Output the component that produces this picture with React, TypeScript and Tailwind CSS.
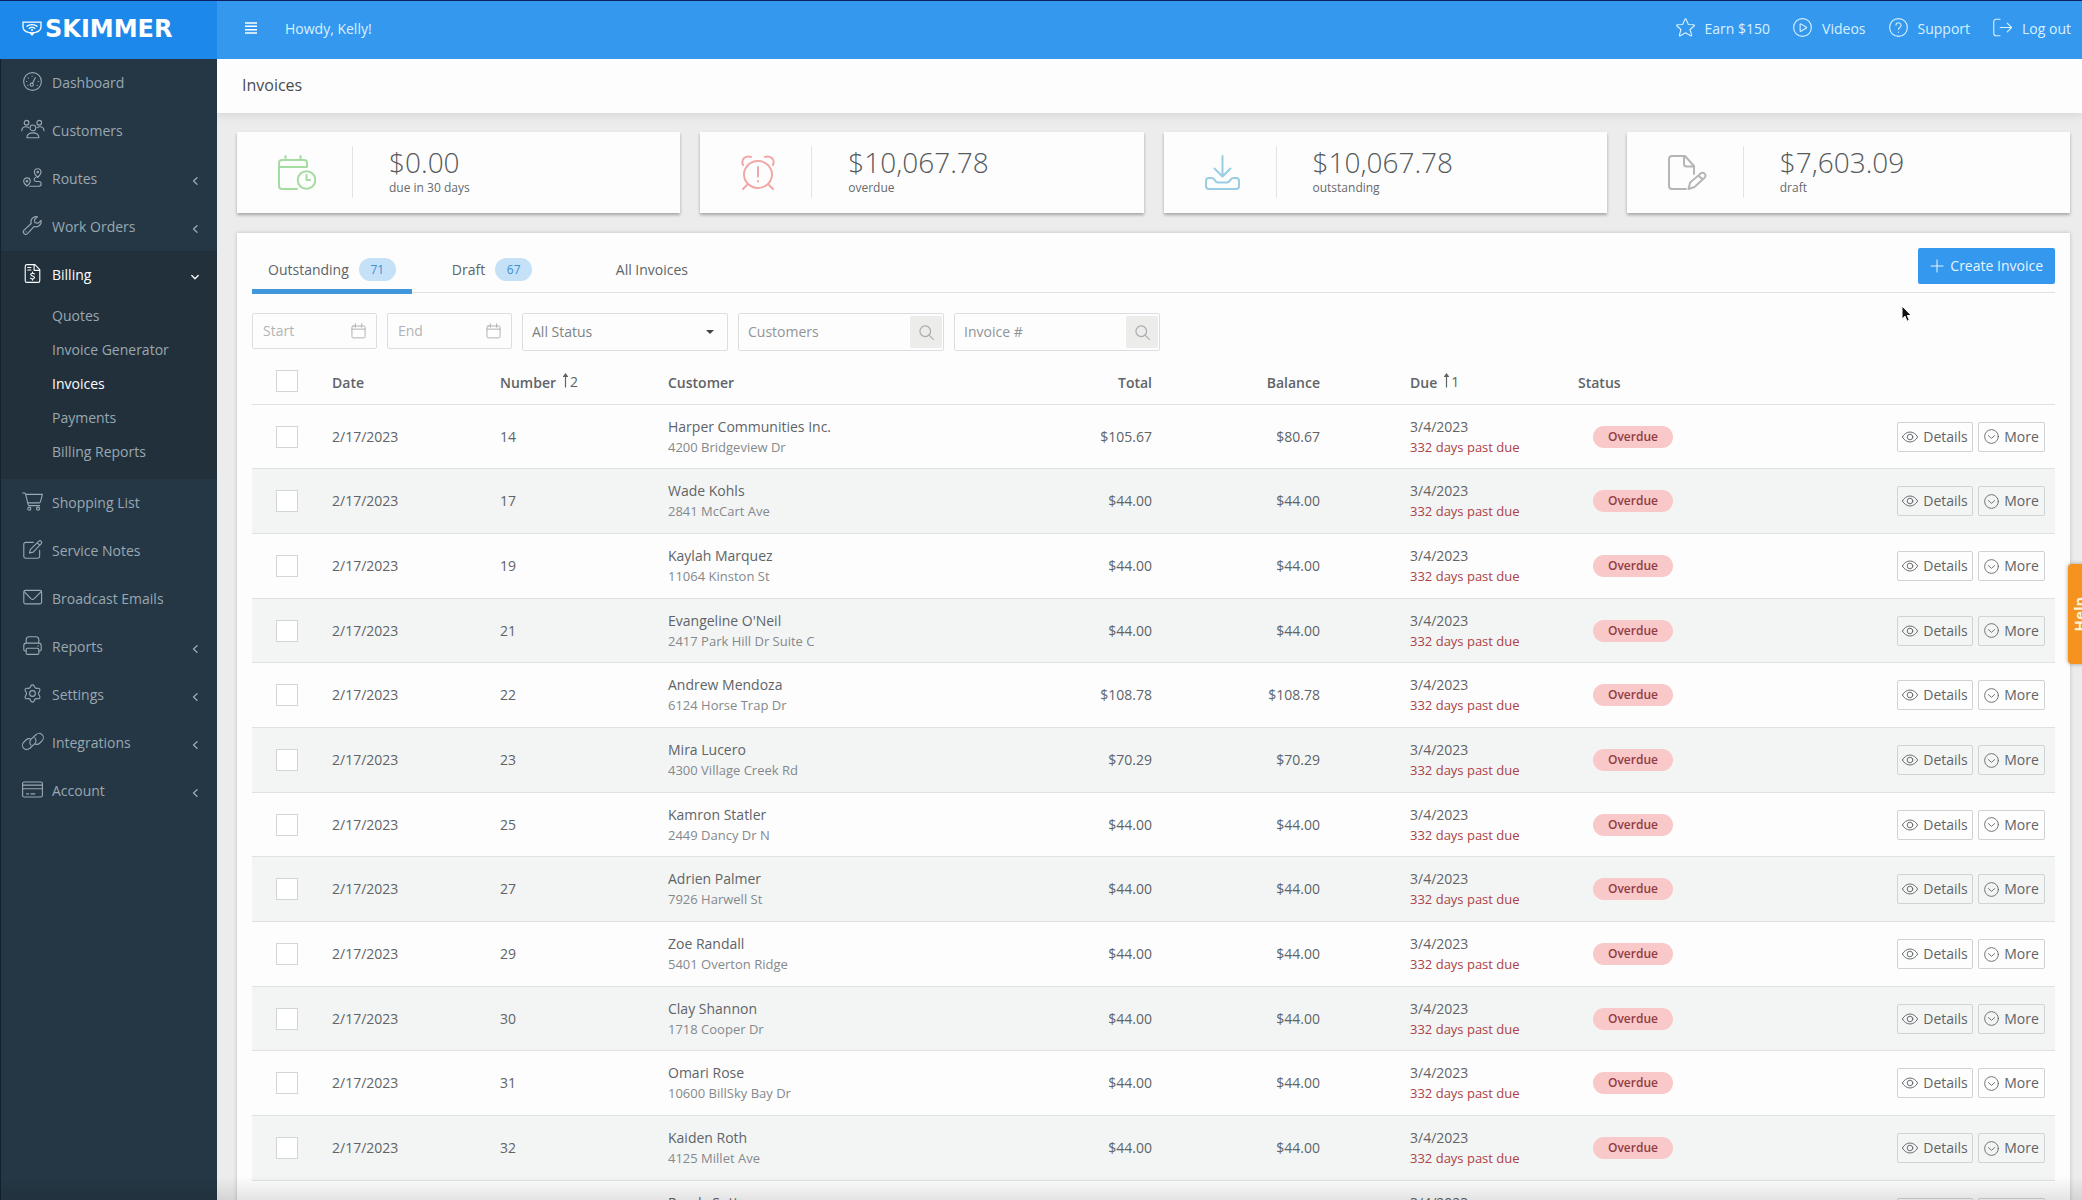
import React, { useState } from 'react';
import clsx from 'clsx';

interface IconProps {
  className?: string;
  width?: number;
  viewBox?: string;
  children: React.ReactNode;
}

function Icon({ className, width = 1.4, viewBox = '0 0 24 24', children }: IconProps) {
  return (
    <svg
      className={clsx('shrink-0', className)}
      viewBox={viewBox}
      fill="none"
      stroke="currentColor"
      strokeWidth={width}
      strokeLinecap="round"
      strokeLinejoin="round"
      aria-hidden="true"
    >
      {children}
    </svg>
  );
}

const icons = {
  dashboard: (
    <>
      <circle cx="12" cy="12" r="11.2" />
      <circle cx="11" cy="16" r="2" />
      <path d="M12 14.2 15.6 7M4.5 12h.3M6.5 7.5l.2.2M11.5 5v.3M19.2 12h.3M6 17l.2-.2M18 17l-.2-.2" />
    </>
  ),
  customers: (
    <>
      <circle cx="12.500" cy="10" r="3.600" />
      <circle cx="4.500" cy="3.500" r="3" />
      <circle cx="20.500" cy="3.500" r="3" />
      <path d="M5 22.500c0-4 3-6.300 7.500-6.300s7.500 2.300 7.500 6.300zM-1.500 13.500c0-3.200 2.300-5 5.200-5 1.300 0 2.500.4 3.400 1.200M26.500 13.500c0-3.200-2.300-5-5.200-5-1.300 0-2.500.4-3.400 1.200" />
    </>
  ),
  routes: (
    <>
      <path d="M18.500 1a4.200 4.200 0 0 1 4.200 4.200c0 3-4.200 6.800-4.200 6.800s-4.200-3.800-4.200-6.800A4.200 4.200 0 0 1 18.500 1zM5 12.500a4.200 4.200 0 0 1 4.200 4.200c0 3-4.200 6-4.200 6s-4.200-3-4.200-6A4.200 4.200 0 0 1 5 12.500z" />
      <circle cx="18.500" cy="5.200" r="1" />
      <circle cx="5" cy="16.700" r="1" />
      <path d="M8.500 23H20a3 3 0 0 0 0-6h-4a2.600 2.600 0 0 1 0-5" />
    </>
  ),
  wrench: (
    <path d="M22.800 5.600a6.500 6.500 0 0 1-8.700 7.600l-8.400 9a3 3 0 0 1-4.300-4.300l9-8.400A6.500 6.500 0 0 1 18.200 1l-3.700 3.700.6 3.700 3.900.8zM4 20h.1" />
  ),
  billing: (
    <>
      <path d="M15 .8H5A2.200 2.200 0 0 0 2.800 3v18A2.200 2.200 0 0 0 5 23.200h14a2.200 2.200 0 0 0 2.200-2.200V7zM14 1v7h7M6 4.500h4M6 7.500h4" />
      <path d="M14.300 12.600c-.5-.6-1.300-.9-2.300-.9-1.300 0-2.200.6-2.200 1.700 0 2.500 4.600 1.100 4.600 3.700 0 1.100-1 1.800-2.400 1.800-1.100 0-2-.4-2.500-1M12 10.300v1.400M12 18.900v1.400" />
    </>
  ),
  cart: (
    <>
      <path d="M-.5 1.200h2.200c.8 0 1.300.4 1.500 1.200L6.500 16c.2.800.8 1.200 1.500 1.200h13M3.500 3h21l-2.500 9.500c-.3.900-.8 1.300-1.700 1.300H6" />
      <circle cx="8" cy="21" r="1.900" />
      <circle cx="19" cy="21" r="1.900" />
    </>
  ),
  notes: (
    <path d="M13 3H3.500A2.500 2.500 0 0 0 1 5.500v15A2.500 2.500 0 0 0 3.500 23h15a2.500 2.500 0 0 0 2.500-2.500V13M8.200 16.500l1.200-4.700L20 1.500a2.200 2.200 0 0 1 3.100 3.100L12.900 15.300zM18 3.500l3 3" />
  ),
  mail: (
    <>
      <rect x="1" y="3" width="22.500" height="17" rx="2" />
      <path d="m1.500 4.500 8.500 9c1.200 1.100 2.900 1.100 4.200 0l8.700-9" />
    </>
  ),
  printer: (
    <>
      <path d="M4 8V5a4 4 0 0 1 4-4h8a4 4 0 0 1 4 4v3M4 19H2.800A2 2 0 0 1 1 17v-5a3 3 0 0 1 3-3h16a3 3 0 0 1 3 3v5a2 2 0 0 1-1.800 2H20M19 12.500h.5" />
      <rect x="4" y="15.500" width="16" height="7.700" rx="1.500" />
    </>
  ),
  gear: (
    <>
      <circle cx="12" cy="12" r="3.600" />
      <path d="M9.900 2.500a2.300 2.300 0 0 1 4.200 0l.7 1.600a2.300 2.300 0 0 0 2.400 1.400l1.700-.2a2.300 2.300 0 0 1 2.100 3.600l-1 1.700a2.300 2.300 0 0 0 0 2.800l1 1.700a2.300 2.300 0 0 1-2.100 3.600l-1.700-.2a2.300 2.300 0 0 0-2.400 1.400l-.7 1.600a2.300 2.300 0 0 1-4.200 0l-.7-1.600a2.300 2.300 0 0 0-2.400-1.400l-1.700.2A2.300 2.300 0 0 1 3 15.100l1-1.700a2.300 2.300 0 0 0 0-2.800L3 8.900a2.300 2.300 0 0 1 2.100-3.600l1.700.2a2.300 2.300 0 0 0 2.400-1.400z" />
    </>
  ),
  link: (
    <path d="M10 16.500a5.300 5.300 0 0 1 .3-7.500l6-5.500a5.300 5.300 0 0 1 7.900 7.500l-3.200 3.200a5.300 5.300 0 0 1-5.200 1.200M15 7.500a5.300 5.300 0 0 1-.3 7.500l-6 5.500A5.300 5.300 0 0 1 .8 13L4 9.800a5.300 5.300 0 0 1 5.200-1.200" />
  ),
  card: (
    <>
      <rect x="-.5" y="2.500" width="25" height="19" rx="2" />
      <path d="M-.5 6.500h25M-.5 11h25M4.500 17.500H7M10 17.500h5" />
    </>
  ),
  star: (
    <path d="m12.700 1.600 2.900 6.600 7 .3c.7 0 1 .8.500 1.300l-5.400 4.700 2 7.200c.2.700-.5 1.200-1.100.8L12 18.700l-6.600 3.800c-.6.400-1.300-.1-1.100-.8l2-7.200L.9 9.800c-.5-.5-.2-1.300.5-1.300l7-.3 2.900-6.600c.3-.6 1.100-.6 1.400 0z" />
  ),
  play: (
    <>
      <circle cx="12" cy="12" r="11.200" />
      <path d="M9 8v8.200c0 .5.500.8.900.6l7-4.200c.4-.2.400-.8 0-1l-7-4.200c-.4-.2-.9.100-.9.600z" />
    </>
  ),
  help: (
    <>
      <circle cx="12" cy="12" r="11.200" />
      <path d="M8.800 9.200a3.200 3.200 0 1 1 4.800 2.800c-1 .6-1.600 1.200-1.600 2.300M12 17.600v.3" />
    </>
  ),
  logout: (
    <path d="M9 1.500H4A3 3 0 0 0 1 4.500v15a3 3 0 0 0 3 3h5M9 12h14.500M18 6.500l5.500 5.500-5.500 5.500" />
  ),
  calendar: (
    <path d="M3.500 4h17a2 2 0 0 1 2 2v15a2 2 0 0 1-2 2h-17a2 2 0 0 1-2-2V6a2 2 0 0 1 2-2zM1.500 9h21M7 .5V6M17 .5V6" />
  ),
  search: <path d="M16.500 16.500 23 23M18.500 10A8.500 8.500 0 1 1 1.500 10a8.500 8.500 0 0 1 17 0z" />,
  eye: (
    <>
      <path d="M.5 12C3 7.500 7.300 4.500 12 4.500S21 7.500 23.500 12C21 16.500 16.700 19.500 12 19.500S3 16.500.5 12z" />
      <circle cx="12" cy="12" r="4.200" />
    </>
  ),
  more: (
    <>
      <circle cx="12" cy="12" r="11" />
      <path d="m7 10.500 5 4.500 5-4.500" />
    </>
  ),
};

type IconName = keyof typeof icons;

interface NavItem {
  label: string;
  icon: IconName;
  expandable?: boolean;
  children?: string[];
}

const navItems: NavItem[] = [
  { label: 'Dashboard', icon: 'dashboard' },
  { label: 'Customers', icon: 'customers' },
  { label: 'Routes', icon: 'routes', expandable: true },
  { label: 'Work Orders', icon: 'wrench', expandable: true },
  {
    label: 'Billing',
    icon: 'billing',
    children: ['Quotes', 'Invoice Generator', 'Invoices', 'Payments', 'Billing Reports'],
  },
  { label: 'Shopping List', icon: 'cart' },
  { label: 'Service Notes', icon: 'notes' },
  { label: 'Broadcast Emails', icon: 'mail' },
  { label: 'Reports', icon: 'printer', expandable: true },
  { label: 'Settings', icon: 'gear', expandable: true },
  { label: 'Integrations', icon: 'link', expandable: true },
  { label: 'Account', icon: 'card', expandable: true },
];

const headerLinks: { label: string; icon: IconName }[] = [
  { label: 'Earn $150', icon: 'star' },
  { label: 'Videos', icon: 'play' },
  { label: 'Support', icon: 'help' },
  { label: 'Log out', icon: 'logout' },
];

const tabs = [
  { label: 'Outstanding', count: 71 },
  { label: 'Draft', count: 67 },
  { label: 'All Invoices' },
];

interface Invoice {
  number: number;
  customer: string;
  address: string;
  total: string;
  balance: string;
}

const invoices: Invoice[] = [
  { number: 14, customer: 'Harper Communities Inc.', address: '4200 Bridgeview Dr', total: '$105.67', balance: '$80.67' },
  { number: 17, customer: 'Wade Kohls', address: '2841 McCart Ave', total: '$44.00', balance: '$44.00' },
  { number: 19, customer: 'Kaylah Marquez', address: '11064 Kinston St', total: '$44.00', balance: '$44.00' },
  { number: 21, customer: "Evangeline O'Neil", address: '2417 Park Hill Dr Suite C', total: '$44.00', balance: '$44.00' },
  { number: 22, customer: 'Andrew Mendoza', address: '6124 Horse Trap Dr', total: '$108.78', balance: '$108.78' },
  { number: 23, customer: 'Mira Lucero', address: '4300 Village Creek Rd', total: '$70.29', balance: '$70.29' },
  { number: 25, customer: 'Kamron Statler', address: '2449 Dancy Dr N', total: '$44.00', balance: '$44.00' },
  { number: 27, customer: 'Adrien Palmer', address: '7926 Harwell St', total: '$44.00', balance: '$44.00' },
  { number: 29, customer: 'Zoe Randall', address: '5401 Overton Ridge', total: '$44.00', balance: '$44.00' },
  { number: 30, customer: 'Clay Shannon', address: '1718 Cooper Dr', total: '$44.00', balance: '$44.00' },
  { number: 31, customer: 'Omari Rose', address: '10600 BillSky Bay Dr', total: '$44.00', balance: '$44.00' },
  { number: 32, customer: 'Kaiden Roth', address: '4125 Millet Ave', total: '$44.00', balance: '$44.00' },
  { number: 33, customer: 'Randy Sutton', address: '3908 Summit Ct', total: '$44.00', balance: '$44.00' },
];

function Logo() {
  return (
    <a href="#" aria-label="Skimmer" className="flex h-full w-[217px] shrink-0 items-center gap-[3px] bg-[#1b88ea] pb-[3px] pl-[22px] text-white">
      <svg className="h-4 w-5 shrink-0" viewBox="0 0 20 16" fill="none" stroke="currentColor" strokeWidth="1.300" aria-hidden="true">
        <path d="M1 1.200h18v4.300c0 3.600-2.600 5.300-5.600 5.900l-3.400.6-3.400-.6C3.600 10.800 1 9.100 1 5.500z" />
        <path d="M4.500 5.500c3-2.600 8-2.600 11 0M6.800 7.600c2-1.600 4.400-1.600 6.400 0" />
        <circle cx="10" cy="9" r="1" fill="currentColor" stroke="none" />
        <path d="m7.500 12 2.500 3 2.500-3z" fill="currentColor" stroke="none" />
      </svg>
      <span className="font-['DejaVu_Sans'] text-2xl leading-none font-bold">SKIMMER</span>
    </a>
  );
}

function Header() {
  return (
    <header className="flex h-[59px] shrink-0 items-center border-t border-[#0c1f63] bg-[#3498ef] text-sm text-[#d9f1ff]">
      <Logo />
      <button aria-label="Toggle menu" className="ml-7 pb-1 text-white">
        <Icon className="h-3 w-3" width={1.6} viewBox="0 0 12 12">
          <path d="M.5 1h11M.5 4.300h11M.5 7.700h11M.5 11h11" />
        </Icon>
      </button>
      <span className="ml-7 pb-[2px]">Howdy, Kelly!</span>
      <nav className="mr-[11px] ml-auto flex items-center gap-[23px] pb-[2px]">
        {headerLinks.map((link) => (
          <a key={link.label} href="#" className="flex items-center gap-[10px]">
            <Icon className="-mt-1 h-[19px] w-[19px]">{icons[link.icon]}</Icon>
            {link.label}
          </a>
        ))}
      </nav>
    </header>
  );
}

function Sidebar() {
  return (
    <aside className="w-[217px] shrink-0 border-l border-[#14222e] bg-[#253745] text-sm text-[#9aa8b2]">
      <ul>
        {navItems.map((item) => {
          const open = Boolean(item.children);
          return (
            <li key={item.label} className={clsx(open && 'bg-[#21303b] pb-[10px]')}>
              <a href="#" className={clsx('flex h-12 items-center pr-[18px] pl-[22px]', open && 'text-white')}>
                <Icon className="mr-[10px] -mt-1 h-[19px] w-[19px] overflow-visible">{icons[item.icon]}</Icon>
                {item.label}
                {item.expandable && (
                  <Icon className="mt-1 ml-auto h-2 w-2" width={1.3} viewBox="0 0 8 8">
                    <path d="M6 .8 2.500 4 6 7.200" />
                  </Icon>
                )}
                {open && (
                  <Icon className="mt-1 ml-auto h-2 w-2" width={1.3} viewBox="0 0 8 8">
                    <path d="M.8 2.500 4 5.700l3.200-3.200" />
                  </Icon>
                )}
              </a>
              {item.children && (
                <ul>
                  {item.children.map((child) => (
                    <li key={child}>
                      <a href="#" className={clsx('flex h-[34px] items-center pl-[51px]', child === 'Invoices' && 'text-white')}>
                        {child}
                      </a>
                    </li>
                  ))}
                </ul>
              )}
            </li>
          );
        })}
      </ul>
    </aside>
  );
}

interface StatCardProps {
  value: string;
  label: string;
  children: React.ReactNode;
}

function StatCard({ value, label, children }: StatCardProps) {
  return (
    <div className="flex h-[81px] flex-1 items-center bg-[#fdfdfd] pb-px pl-[41px] shadow-[0_2px_3px_rgba(0,0,0,0.3)]">
      {children}
      <div className="ml-9 h-[52px] w-px bg-[#e3e5e5]" />
      <div className="ml-9">
        <p className="text-[28px] leading-8 font-light text-[#55595c]">{value}</p>
        <p className="text-xs leading-5 text-[#666a6d]">{label}</p>
      </div>
    </div>
  );
}

function Stats() {
  return (
    <div className="flex gap-5">
      <StatCard value="$0.00" label="due in 30 days">
        <Icon className="h-[35px] w-[38px] text-[#a5dca2]" width={2} viewBox="0 0 38 35">
          <path d="M19 34H4a3 3 0 0 1-3-3V8a3 3 0 0 1 3-3h22a3 3 0 0 1 3 3v4H1M7.500 1v4M22.500 1v4" />
          <circle cx="28.500" cy="25" r="8.800" />
          <path d="M28.500 20v5h3.500" />
        </Icon>
      </StatCard>
      <StatCard value="$10,067.78" label="overdue">
        <Icon className="h-[35px] w-[34px] text-[#f0a8a6]" width={2} viewBox="0 0 34 35">
          <ellipse cx="17" cy="19.500" rx="14" ry="13.500" />
          <path d="M17 12v9.500M17 26v.5M6 30l-4 4M28 30l4 4M2 10C-.5 4 5 0 10 2M32 10c2.500-6-3-10-8-8" />
        </Icon>
      </StatCard>
      <StatCard value="$10,067.78" label="outstanding">
        <Icon className="h-[35px] w-[35px] text-[#98cde3]" width={2} viewBox="0 0 35 35">
          <path d="M17.500 1v20M9.500 13.500l8 8 8-8" />
          <path d="M4 23h3c3 0 2.500 4.500 6 4.500h9c3.500 0 3-4.500 6-4.500h3a3 3 0 0 1 3 3v5a3 3 0 0 1-3 3H4a3 3 0 0 1-3-3v-5a3 3 0 0 1 3-3z" />
        </Icon>
      </StatCard>
      <StatCard value="$7,603.09" label="draft">
        <Icon className="h-[35px] w-[39px] text-[#b4b6b7]" width={2} viewBox="0 0 39 35">
          <path d="M18 34H4a3 3 0 0 1-3-3V4a3 3 0 0 1 3-3h13l9 10v8M16 1v8a2.500 2.500 0 0 0 2.500 2.500H26" />
          <path d="m20.500 34 1.600-6.500L33 18.200a2.900 2.900 0 0 1 4 4L26.500 32zM30.500 20.500l4 4" />
        </Icon>
      </StatCard>
    </div>
  );
}

function DateField({ label }: { label: string }) {
  return (
    <label className="flex h-9 w-[125px] items-center rounded-xs border border-[#dcdfdf] px-[10px] text-[#aaaeb0]">
      <input type="text" aria-label={label} placeholder={label} className="w-0 flex-1 outline-none placeholder:text-[#b1b4b6]" />
      <Icon className="h-4 w-[15px]" width={1.500}>{icons.calendar}</Icon>
    </label>
  );
}

function SearchField({ label }: { label: string }) {
  return (
    <div className="flex h-[38px] w-[206px] items-center rounded-xs border border-[#dcdfdf] pr-px pl-[9px]">
      <input type="text" aria-label={label} placeholder={label} className="w-0 flex-1 outline-none placeholder:text-[#909497]" />
      <button aria-label={`Search ${label}`} className="flex h-8 w-8 items-center justify-center rounded-xs bg-[#ececeb] text-[#aaadad]">
        <Icon className="h-[15px] w-[15px]" width={1.900}>{icons.search}</Icon>
      </button>
    </div>
  );
}

function Filters() {
  return (
    <div className="mt-5 flex items-start gap-[10px]">
      <DateField label="Start" />
      <DateField label="End" />
      <div className="relative">
        <select aria-label="Status" className="block h-[38px] w-[206px] appearance-none rounded-xs border border-[#dcdfdf] px-[9px] text-[#7f8386]">
          <option>All Status</option>
          <option>Overdue</option>
        </select>
        <span className="pointer-events-none absolute top-[17px] right-[14px] border-x-4 border-t-4 border-x-transparent border-t-[#444]" />
      </div>
      <SearchField label="Customers" />
      <SearchField label="Invoice #" />
    </div>
  );
}

function SortMark({ order }: { order: number }) {
  return (
    <span className="ml-[5px] inline-flex items-center font-normal">
      <Icon className="-mt-1 h-[15px] w-[9px]" width={1.2} viewBox="0 0 8 15">
        <path d="M4 14V1" />
        <path d="M2 3.500 4 1l2 2.500z" fill="currentColor" />
      </Icon>
      {order}
    </span>
  );
}

function Checkbox({ label }: { label: string }) {
  return (
    <input
      type="checkbox"
      aria-label={label}
      className="block h-[22px] w-[22px] appearance-none border border-[#d3d6d6] bg-white checked:bg-[#3498ef]"
    />
  );
}

function InvoiceRow({ invoice }: { invoice: Invoice }) {
  return (
    <tr className="h-[65px] nth-[3n+1]:h-16 even:bg-[#f3f5f5] [&>td]:border-b [&>td]:border-[#dfe2e2]">
      <td className="pl-6">
        <Checkbox label={`Select invoice ${invoice.number}`} />
      </td>
      <td className="px-[15px]">2/17/2023</td>
      <td className="px-[15px]">{invoice.number}</td>
      <td className="px-[15px]">
        <p>{invoice.customer}</p>
        <p className="text-[13px] text-[#85898b]">{invoice.address}</p>
      </td>
      <td className="px-[15px] text-right">{invoice.total}</td>
      <td className="px-[15px] text-right">{invoice.balance}</td>
      <td className="pl-[75px]">
        <p>3/4/2023</p>
        <p className="text-[13px] text-[#ab4245]">332 days past due</p>
      </td>
      <td className="px-[31px]">
        <span className="flex h-[22px] w-20 items-center justify-center rounded-full bg-[#f9c8c8] text-xs font-semibold text-[#913c44]">
          Overdue
        </span>
      </td>
      <td className="pr-[10px]">
        <div className="flex justify-end gap-[5px]">
          <button className="flex h-[30px] w-[76px] items-center justify-center gap-[5px] rounded-xs border border-[#d0d3d3]">
            <Icon className="h-4 w-4">{icons.eye}</Icon>
            Details
          </button>
          <button className="flex h-[30px] w-[67px] items-center justify-center gap-[5px] rounded-xs border border-[#d0d3d3]">
            <Icon className="h-[15px] w-[15px]">{icons.more}</Icon>
            More
          </button>
        </div>
      </td>
    </tr>
  );
}

function InvoiceTable() {
  return (
    <table className="mt-[6px] w-full table-fixed border-separate border-spacing-0 text-left leading-5">
      <colgroup>
        <col className="w-[65px]" />
        <col className="w-[168px]" />
        <col className="w-[168px]" />
        <col className="w-[346px]" />
        <col className="w-[168px]" />
        <col className="w-[168px]" />
        <col className="w-[227px]" />
        <col className="w-[168px]" />
        <col />
      </colgroup>
      <thead>
        <tr className="h-12 [&>th]:border-b [&>th]:border-[#dfe2e2] [&>th]:pt-1 [&>th]:font-semibold [&>th:first-child]:pt-0">
          <th className="pl-6">
            <Checkbox label="Select all invoices" />
          </th>
          <th className="px-[15px]">Date</th>
          <th className="px-[15px]">
            Number
            <SortMark order={2} />
          </th>
          <th className="px-[15px]">Customer</th>
          <th className="px-[15px] text-right">Total</th>
          <th className="px-[15px] text-right">Balance</th>
          <th className="pl-[75px]">
            Due
            <SortMark order={1} />
          </th>
          <th className="px-4">Status</th>
          <th aria-label="Actions" />
        </tr>
      </thead>
      <tbody>
        {invoices.map((invoice) => (
          <InvoiceRow key={invoice.number} invoice={invoice} />
        ))}
      </tbody>
    </table>
  );
}

export default function App() {
  const [activeTab, setActiveTab] = useState('Outstanding');

  return (
    <div className="relative flex h-screen flex-col overflow-hidden bg-[#ececec] font-['Open_Sans',sans-serif] text-sm text-[#606467]">
      <Header />
      <div className="flex min-h-0 flex-1">
        <Sidebar />
        <main className="min-w-0 flex-1 overflow-hidden">
          <div className="flex h-[54px] items-center bg-[#fdfdfd] pb-[2px] pl-[25px] shadow-[0_1px_10px_rgba(0,0,0,0.12)]">
            <h1 className="text-base text-[#484c4f]">Invoices</h1>
          </div>
          <div className="flex flex-col gap-5 py-[19px] pr-3 pl-5">
            <Stats />
            <section className="bg-[#fdfdfd] p-[15px] shadow-[0_0_4px_rgba(0,0,0,0.2)]">
              <div className="flex h-[45px] items-start justify-between border-b border-[#dfe2e2]">
                <div role="tablist" className="flex gap-6">
                  {tabs.map((tab) => (
                    <button
                      key={tab.label}
                      role="tab"
                      aria-selected={tab.label === activeTab}
                      onClick={() => setActiveTab(tab.label)}
                      className={clsx(
                        'flex h-[46px] min-w-[140px] items-center gap-[10px] border-b-[5px] px-4 pt-[2px]',
                        tab.label === activeTab ? 'border-[#4197dc]' : 'border-transparent',
                      )}
                    >
                      {tab.label}
                      {tab.count && (
                        <span className="flex h-[23px] w-[37px] items-center justify-center rounded-full bg-[#c5e1f8] text-xs text-[#3b8fd6]">
                          {tab.count}
                        </span>
                      )}
                    </button>
                  ))}
                </div>
                <button className="flex h-9 items-center gap-[6px] rounded-xs bg-[#3498ef] px-3 text-[#e6f5ff]">
                  <Icon className="h-[14px] w-[14px]" width={1} viewBox="0 0 14 14">
                    <path d="M7 1v12M1 7h12" />
                  </Icon>
                  Create Invoice
                </button>
              </div>
              <Filters />
              <InvoiceTable />
            </section>
          </div>
        </main>
      </div>

      <button className="absolute top-[564px] -right-[9px] flex h-[100px] w-[23px] items-center justify-center rounded-l-sm bg-[#f6921e] shadow-[0_0_4px_rgba(0,0,0,0.35)]">
        <span className="rotate-180 text-[15px] font-bold text-[#fff3d6] [writing-mode:vertical-rl]">Help</span>
      </button>
      <div className="pointer-events-none absolute inset-x-0 bottom-0 h-6 bg-linear-to-b from-transparent to-black/10" />
      <svg className="pointer-events-none absolute top-[305px] left-[1901px] h-[18px] w-3" viewBox="0 0 12 18" aria-hidden="true">
        <path d="M1 1v13l3-2.800 2 5 2.300-1-2-4.700h4z" fill="#111" stroke="#fff" strokeWidth="1" />
      </svg>
    </div>
  );
}
